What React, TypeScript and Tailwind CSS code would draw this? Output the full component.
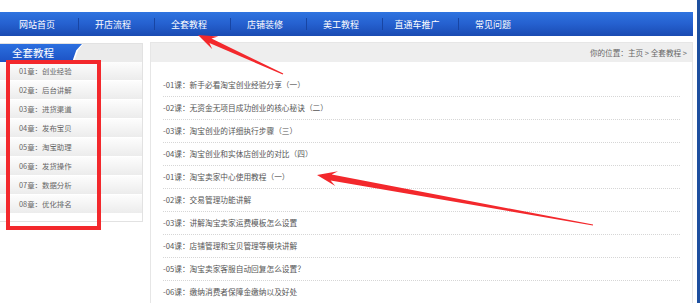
import React from "react";

const navItems = ["网站首页", "开店流程", "全套教程", "店铺装修", "美工教程", "直通车推广", "常见问题"];
const chapters = [
  "01章：创业经验",
  "02章：后台讲解",
  "03章：进货渠道",
  "04章：发布宝贝",
  "05章：淘宝助理",
  "06章：发货操作",
  "07章：数据分析",
  "08章：优化排名",
];
const lessons = [
  "-01课：新手必看淘宝创业经验分享（一）",
  "-02课：无资金无项目成功创业的核心秘诀（二）",
  "-03课：淘宝创业的详细执行步骤（三）",
  "-04课：淘宝创业和实体店创业的对比（四）",
  "-01课：淘宝卖家中心使用教程（一）",
  "-02课：交易管理功能讲解",
  "-03课：讲解淘宝卖家运费模板怎么设置",
  "-04课：店铺管理和宝贝管理等模块讲解",
  "-05课：淘宝卖家客服自动回复怎么设置？",
  "-06课：缴纳消费者保障金缴纳以及好处",
];

type P = [number, number];
function arrow(tip: P, tail: P, L: number, H: number, w1: number, w0: number) {
  const dx = tail[0] - tip[0];
  const dy = tail[1] - tip[1];
  const len = Math.hypot(dx, dy);
  const d: P = [dx / len, dy / len];
  const n: P = [-d[1], d[0]];
  const at = (base: P, a: number, b: number): P => [base[0] + d[0] * a + n[0] * b, base[1] + d[1] * a + n[1] * b];
  const pts: P[] = [
    tip,
    at(tip, L, H),
    at(tip, L * 0.72, w1),
    at(tail, 0, w0),
    at(tail, 0, -w0),
    at(tip, L * 0.72, -w1),
    at(tip, L, -H),
  ];
  return pts.map((p) => p.map((v) => v.toFixed(1)).join(",")).join(" ");
}

export default function App() {
  return (
    <div
      className="relative w-[700px] h-[303px] overflow-hidden bg-white flex"
      style={{ fontFamily: '"Noto Sans CJK SC", "Microsoft YaHei", sans-serif' }}
    >
      <div className="w-[697px] flex flex-col">
        <div className="h-[12px] shrink-0" />
        {/* Nav */}
        <div className="w-[693px] h-[24px] shrink-0 flex items-center pl-[3px] bg-gradient-to-b from-[#2f74e0] via-[#2560cf] to-[#1a4bb2]">
          {navItems.map((t, i) => (
            <React.Fragment key={t}>
              <div className="w-[75px] h-full flex items-center justify-center pr-[7px] text-[9px] text-white leading-none">
                {t}
              </div>
              {i < navItems.length - 1 && (
                <div className="flex h-[12px]">
                  <div className="w-px h-full bg-[#1845a3]" />
                </div>
              )}
            </React.Fragment>
          ))}
        </div>
        {/* Body */}
        <div className="flex shrink-0 mt-[6px] gap-[7px] items-start">
          {/* Left panel */}
          <div className="w-[143px] mt-[1px] border border-l-0 border-[#e2e2e2] pb-[7px] bg-white">
            <div className="h-[18px] bg-[#ebebeb] relative">
              <div className="absolute left-0 top-0 h-[18px] w-[83px] bg-white [clip-path:polygon(0_0,100%_0,94%_35%,89%_100%,0_100%)]" />
              <div className="absolute left-0 top-0 h-[18px] w-[82px] bg-gradient-to-b from-[#2b6fe0] to-[#1d52c4] [clip-path:polygon(0_0,100%_0,93%_35%,88%_100%,0_100%)]" />
              <div className="relative h-full flex items-center pl-[12px] text-[10.5px] text-white leading-none">
                全套教程
              </div>
            </div>
            <div>
              {chapters.map((c) => (
                <div
                  key={c}
                  className="h-[19px] flex items-center pl-[19px] text-[7.4px] text-[#666] leading-none bg-gradient-to-b from-[#fdfdfd] to-[#ececec] border-b border-white"
                >
                  {c}
                </div>
              ))}
            </div>
          </div>
          {/* Right panel */}
          <div className="w-[543px] h-[270px] border border-[#e6e6e6] border-b-0">
            <div className="h-[19px] bg-[#eeeeee] flex items-center justify-end pr-[5px] text-[7.6px] text-[#666] leading-none">
              你的位置：主页 &gt; 全套教程 &gt;
            </div>
            <div className="pt-[12px] pl-[12px] pr-[12px]">
              {lessons.map((l, i) => (
                <div
                  key={i}
                  className="h-[23px] flex items-center text-[7.7px] text-[#555] leading-none border-b border-dotted border-[#d6d6d6]"
                >
                  {l}
                </div>
              ))}
            </div>
          </div>
        </div>
      </div>
      <div className="w-[3px] h-full bg-[#1d4f9f]" />

      {/* Red highlight box */}
      <div className="absolute left-[6px] top-[60px] w-[95px] h-[170px] border-[4px] border-[#f3282c]" />

      {/* Red arrows */}
      <svg className="absolute left-0 top-0" width="700" height="303" viewBox="0 0 700 303">
        <polygon points={arrow([198, 35], [283, 74], 19, 7, 2.5, 0.6)} fill="#f3282c" />
        <polygon points={arrow([317, 175], [593, 225], 20, 7.5, 3, 0.5)} fill="#f3282c" />
      </svg>
    </div>
  );
}
